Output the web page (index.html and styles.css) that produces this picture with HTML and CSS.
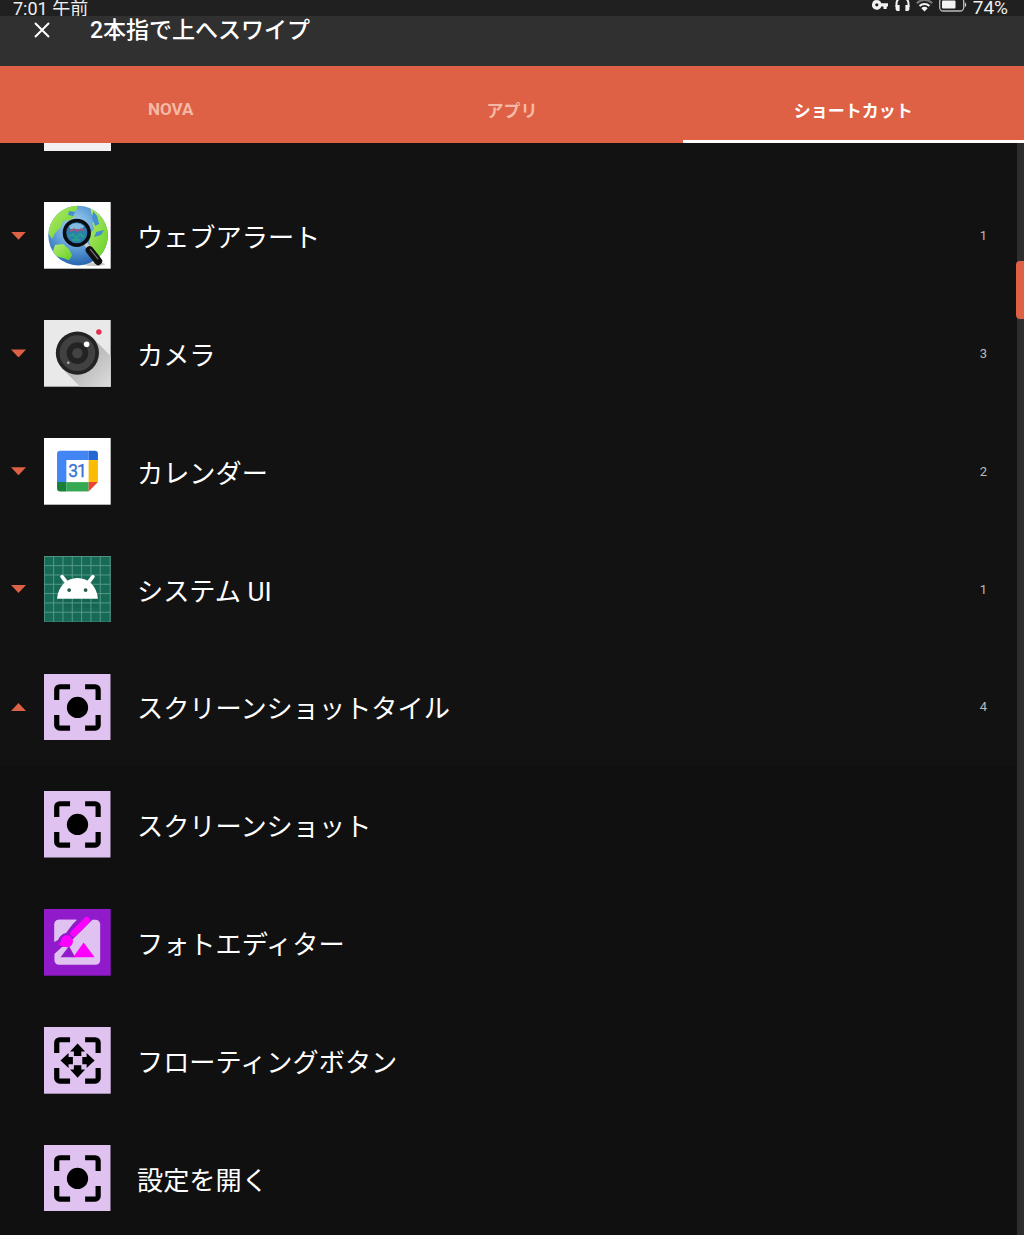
FILE: index.html
```
<!DOCTYPE html>
<html lang="ja">
<head>
    <meta charset="UTF-8">
    <meta name="viewport" content="width=device-width, initial-scale=1.0">
    <title>2本指で上へスワイプ</title>
    <link rel="stylesheet" href="styles.css">
</head>
<body>
    <!-- Shared icon for the screenshot tile -->
    <svg class="defs" width="0" height="0">
        <symbol id="brackets" viewBox="0 0 66.5 66.5">
            <path d="M12.7 26V15.7a3 3 0 0 1 3-3H26M41 12.7h10a3 3 0 0 1 3 3V26M54 41v10a3 3 0 0 1-3 3H41M26 54H15.7a3 3 0 0 1-3-3V41" fill="none" stroke="#000" stroke-width="5.2"/>
        </symbol>
        <symbol id="tile" viewBox="0 0 66.5 66.5">
            <rect width="66.5" height="66.5" fill="#dfc2ef"/>
            <use href="#brackets"/>
            <circle cx="33.4" cy="33.3" r="10.6"/>
        </symbol>
    </svg>

    <div class="status-bar">
        <div class="clock">7:01 午前</div>
        <div class="status-icons">
            <svg width="17" height="16" viewBox="0 0 17 16">
                <path d="M4.8 0a4.8 4.8 0 1 0 4.5 6.5h2.2v2.6h3.2V6.5H16V3.2H9.3A4.8 4.8 0 0 0 4.8 0zm0 3.2a1.6 1.6 0 1 1 0 3.2 1.6 1.6 0 0 1 0-3.2z" fill="#f2f2f2"/>
            </svg>
            <svg width="15" height="16" viewBox="0 0 15 16">
                <path d="M1.5 7V3.5a6 6 0 0 1 12 0V7" fill="none" stroke="#f2f2f2" stroke-width="2"/>
                <path d="M.6 5h4v6H2.5a2 2 0 0 1-1.9-2zM10.400 5h4v4a2 2 0 0 1-1.900 2h-2.100z" fill="#f2f2f2"/>
            </svg>
            <svg width="17" height="16" viewBox="0 0 17 16">
                <path d="M.8 3.200a11 11 0 0 1 15.400 0" fill="none" stroke="#777" stroke-width="2"/>
                <path d="M3.500 6a7 7 0 0 1 10 0" fill="none" stroke="#f2f2f2" stroke-width="2"/>
                <path d="M5.300 8.200a4.500 4.500 0 0 1 6.400 0L8.500 11.500z" fill="#f2f2f2"/>
            </svg>
            <svg width="28" height="16" viewBox="0 0 28 16">
                <rect x=".7" y="-2" width="24" height="13" rx="3.5" fill="none" stroke="#bbb" stroke-width="1.3"/>
                <rect x="3" y=".5" width="13.5" height="8" rx="1" fill="#f2f2f2"/>
                <path d="M25.800 2v5.500q3-2.700 0-5.500z" fill="#ccc"/>
            </svg>
        </div>
        <div class="battery">74%</div>
    </div>

    <div class="toolbar">
        <svg class="close" width="16" height="16" viewBox="0 0 16 16">
            <path d="M1 1l14 14M15 1L1 15" stroke="#fff" stroke-width="2"/>
        </svg>
        <h1 class="title">2本指で上へスワイプ</h1>
    </div>

    <div class="tabs">
        <div class="tab">NOVA</div>
        <div class="tab">アプリ</div>
        <div class="tab active">ショートカット</div>
    </div>

    <div class="content">
        <div class="list">
            <div class="row">
                <span class="arrow"></span>
                <div class="icon blank"></div>
            </div>

            <div class="row">
                <span class="arrow"></span>
                <svg class="icon" viewBox="0 0 66.5 66.5">
                    <defs>
                        <radialGradient id="sea" cx=".45" cy=".35" r=".65">
                            <stop offset="0" stop-color="#b4dcf4"/>
                            <stop offset=".55" stop-color="#5f9fd8"/>
                            <stop offset="1" stop-color="#2765b0"/>
                        </radialGradient>
                        <linearGradient id="land" x2="1" y2="1">
                            <stop offset="0" stop-color="#b8ec70"/>
                            <stop offset="1" stop-color="#62cf20"/>
                        </linearGradient>
                        <clipPath id="globe"><circle cx="34" cy="33.5" r="29.7"/></clipPath>
                    </defs>
                    <rect width="66.5" height="66.5" fill="#fff"/>
                    <ellipse cx="50" cy="62" rx="11" ry="2" fill="#ccc"/>
                    <circle cx="34" cy="33.5" r="29.7" fill="url(#sea)"/>
                    <g clip-path="url(#globe)" fill="url(#land)">
                        <path d="M4 31l2-14L19 4l15-1-2 6-5 2 4 3-5 4-7 1-2 6-6 6-3 6z"/>
                        <path d="M46 3l8 4 12 17v18l-5 11-9 2-5-9-2-6 1-8 4-5-2-6 4-3-5-7z"/>
                        <path d="M9 49l2-6 8-1 6 5 3 6-3 5-5-2-8-2z"/>
                        <path d="M49 9l4 5 2 8-4 2-3-8zM52 30l8-2-3 5-7 2zM25 9l6 1-2 4-5-1z" fill="#438fd0"/>
                    </g>
                    <path d="M41 41l5 6" stroke="#ccc" stroke-width="4"/>
                    <path d="M45.500 48l8.500 11" stroke="#111" stroke-width="8" stroke-linecap="round"/>
                    <path d="M46 47l8 10" stroke="#777" stroke-width="1.200"/>
                    <circle cx="32.700" cy="30.700" r="12.300" fill="#2c7eac" stroke="#0b0d13" stroke-width="3.600"/>
                    <path d="M25 24q7-6 15 0l-2 3H26z" fill="#83bbdf"/>
                    <path d="M26 29l4-2 3 2 4-2 3 2" fill="none" stroke="#a7577d" stroke-width="1.800"/>
                    <path d="M25 34l4-2 3 4 4-4 4 3M28 38h8" fill="none" stroke="#24a08d" stroke-width="2"/>
                </svg>
                <div class="label">ウェブアラート</div>
                <div class="count">1</div>
            </div>

            <div class="row">
                <span class="arrow"></span>
                <svg class="icon" viewBox="0 0 66.5 66.5">
                    <defs>
                        <linearGradient id="shade" x1=".2" y1=".2" x2="1" y2="1">
                            <stop offset="0" stop-color="#a5a5a5"/>
                            <stop offset="1" stop-color="#dedede"/>
                        </linearGradient>
                    </defs>
                    <rect width="66.5" height="66.5" fill="#e9e9e9"/>
                    <path d="M48.5 18l18 18v30.5H36L18 48z" fill="url(#shade)"/>
                    <circle cx="33.3" cy="33" r="21.5" fill="#232323"/>
                    <circle cx="33.3" cy="33" r="14.3" fill="none" stroke="#414141" stroke-width="7"/>
                    <circle cx="33.3" cy="33" r="5.2" fill="#434343"/>
                    <circle cx="42.5" cy="24.2" r="2.8" fill="#fff"/>
                    <circle cx="24.2" cy="42.7" r="1.2" fill="#bbb"/>
                    <circle cx="54.7" cy="12" r="2.7" fill="#e0304f"/>
                </svg>
                <div class="label">カメラ</div>
                <div class="count">3</div>
            </div>

            <div class="row">
                <span class="arrow"></span>
                <svg class="icon" viewBox="0 0 66.5 66.5">
                    <rect width="66.5" height="66.5" fill="#fff"/>
                    <path d="M13 44V16a3.3 3.3 0 0 1 3.3-3.3h28.2V22H22.3v22z" fill="#4285f4"/>
                    <path d="M44.5 12.7h6a3.3 3.3 0 0 1 3.3 3.3v6h-9.3z" fill="#2467d2"/>
                    <path d="M44.5 22h9.3v22h-9.3z" fill="#fbbc04"/>
                    <path d="M22.3 44h22.2v9.3H22.3z" fill="#34a853"/>
                    <path d="M13 44h9.3v9.3h-6A3.3 3.3 0 0 1 13 50z" fill="#188038"/>
                    <path d="M44.5 44h9.3l-9.300 9.300z" fill="#ea4335"/>
                    <text class="date" x="33" y="39" text-anchor="middle">31</text>
                </svg>
                <div class="label">カレンダー</div>
                <div class="count">2</div>
            </div>

            <div class="row">
                <span class="arrow"></span>
                <svg class="icon" viewBox="0 0 66.5 66.5">
                    <rect width="66.5" height="66.5" fill="#176b56"/>
                    <path d="M13.5 42.5l9 9h31V35l-4-4z" fill="#125d4b" opacity=".5"/>
                    <path d="M.3 0v66M9.600 0v66.500M18.900 0v66.500M28.200 0v66.500M37.500 0v66.500M46.800 0v66.500M56.100 0v66.500M66 0v66.500M0 .4h66.500M0 9.600h66.500M0 18.900h66.500M0 28.200h66.500M0 37.500h66.500M0 46.800h66.500M0 56.100h66.500M0 66h66.500" stroke="#5b9c8b" stroke-width=".9"/>
                    <path d="M18 20.500l5.500 7M48.800 20.500l-5.500 7" stroke="#fff" stroke-width="3.600" stroke-linecap="round"/>
                    <path d="M13 42.600c1-12 9.500-20.600 20.400-20.600s19.400 8.600 20.400 20.600z" fill="#fff"/>
                    <circle cx="25.100" cy="34" r="1.900" fill="#28594d"/>
                    <circle cx="41.500" cy="34" r="1.900" fill="#28594d"/>
                </svg>
                <div class="label">システム UI</div>
                <div class="count">1</div>
            </div>

            <div class="row">
                <span class="arrow up"></span>
                <svg class="icon"><use href="#tile"/></svg>
                <div class="label">スクリーンショットタイル</div>
                <div class="count">4</div>
            </div>

            <div class="row child">
                <svg class="icon"><use href="#tile"/></svg>
                <div class="label">スクリーンショット</div>
            </div>

            <div class="row child">
                <svg class="icon" viewBox="0 0 66.5 66.5">
                    <rect width="66.5" height="66.5" fill="#911acb"/>
                    <rect x="10.4" y="10.7" width="45.6" height="45" rx="4.5" fill="#dfc2ef"/>
                    <path d="M10 33v12l8-7q8 0 10-7l20-20V9H33L22 24q-6 1-8 7z" fill="#911acb"/>
                    <path d="M10.400 33V15.200a4.500 4.500 0 0 1 4.500-4.500H33z" fill="#dfc2ef"/>
                    <path d="M42.800 11.200L29.500 24.500" stroke="#f0f" stroke-width="6.500" stroke-linecap="round"/>
                    <path d="M14 35q3-1 3-4a6 6 0 1 1 7 7q-5 1-10-3z" fill="#f0f"/>
                    <path d="M16.500 48l8.500-11 6 11z" fill="#911acb"/>
                    <path d="M29 48l10.500-14.500L50.500 48z" fill="#f0f"/>
                </svg>
                <div class="label">フォトエディター</div>
            </div>

            <div class="row child">
                <svg class="icon" viewBox="0 0 66.5 66.5">
                    <rect width="66.5" height="66.5" fill="#dfc2ef"/>
                    <use href="#brackets"/>
                    <path id="move" d="M33.5 16.5l7.500 8h-3.800v4.300h-7.400v-4.300H26z"/>
                    <use href="#move" transform="rotate(90 33.5 33.5)"/>
                    <use href="#move" transform="rotate(180 33.5 33.5)"/>
                    <use href="#move" transform="rotate(270 33.5 33.5)"/>
                </svg>
                <div class="label">フローティングボタン</div>
            </div>

            <div class="row child">
                <svg class="icon"><use href="#tile"/></svg>
                <div class="label">設定を開く</div>
            </div>
        </div>
        <div class="scroll-track"><div class="scroll-thumb"></div></div>
    </div>
</body>
</html>
```
FILE: styles.css
```
* {
    margin: 0;
    padding: 0;
    box-sizing: border-box;
}

body {
    background: #121212;
    color: #fff;
    font-family: Roboto, 'Noto Sans CJK JP', sans-serif;
    height: 1235px;
    overflow: hidden;
    display: flex;
    flex-direction: column;
}

svg {
    display: block;
    flex: none;
}

.defs {
    position: absolute;
}

.status-bar {
    height: 16px;
    flex: none;
    background: #202020;
    display: flex;
    padding: 0 16px 0 13px;
    font-size: 18px;
    line-height: 17px;
    color: #eee;
    white-space: nowrap;
}

.status-icons {
    display: flex;
    gap: 6px;
    margin-left: auto;
}

.battery {
    margin-left: 6px;
    font-size: 19px;
    line-height: 16px;
}

.toolbar {
    height: 50px;
    flex: none;
    background: #303030;
    display: flex;
    align-items: flex-start;
    padding-left: 34px;
}

.close {
    margin-top: 6px;
}

.title {
    margin-left: 40px;
    font-size: 23px;
    font-weight: 500;
    line-height: 29px;
}

.tabs {
    height: 77px;
    flex: none;
    background: #de6146;
    display: flex;
}

.tab {
    flex: 1;
    padding-top: 12px;
    border-bottom: 3px solid transparent;
    display: flex;
    align-items: center;
    justify-content: center;
    font-size: 17px;
    font-weight: 700;
    color: #f4b9a5;
}

.tab.active {
    color: #fff;
    border-color: #fff;
}

.content {
    flex: 1;
    min-height: 0;
    display: flex;
    overflow: hidden;
}

.list {
    flex: 1;
    margin-top: -84px;
}

.row {
    height: 117.8px;
    display: flex;
    align-items: center;
    padding: 0 29px 0 11px;
}

.row.child {
    background: #101010;
    padding-left: 44.3px;
}

.arrow {
    width: 15px;
    height: 8px;
    margin-right: 18.3px;
    background: #de6146;
    clip-path: polygon(0 0, 100% 0, 50% 100%);
}

.arrow.up {
    clip-path: polygon(50% 0, 100% 100%, 0 100%);
}

.icon {
    width: 66.7px;
    height: 66.7px;
    flex: none;
}

.icon.blank {
    background: #f2f0f1;
}

.label {
    flex: 1;
    margin-left: 26px;
    padding-top: 5px;
    font-size: 26.2px;
    line-height: 38px;
}

.count {
    font-size: 13px;
    color: #bbb;
}

.date {
    font-family: Roboto, sans-serif;
    font-size: 17.5px;
    letter-spacing: -1px;
    fill: #3474d4;
    stroke: #3474d4;
    stroke-width: 0.3;
}

.scroll-track {
    width: 8px;
    padding: 118px 0 0;
    background: linear-gradient(90deg, #121212 1px, #2e2e2e 1px);
}

.scroll-thumb {
    height: 58px;
    border-radius: 4px 0 0 4px;
    background: #de6146;
}
```
